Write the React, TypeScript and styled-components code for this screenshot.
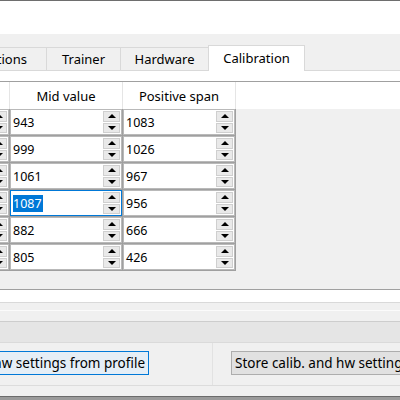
import React from "react";
import { styled, createGlobalStyle } from "styled-components";

const GlobalStyle = createGlobalStyle`
  html, body {
    margin: 0;
    padding: 0;
    background: #f0f0f0;
  }
  body {
    font-family: "Noto Sans", "Open Sans", sans-serif;
    font-size: 13px;
    color: #000;
    overflow: hidden;
  }
`;

// first column (negative span) lies outside the crop, only its spin buttons show
const ROWS = [
  { mid: 943, pos: 1083 },
  { mid: 999, pos: 1026 },
  { mid: 1061, pos: 967 },
  { mid: 1087, pos: 956 },
  { mid: 882, pos: 666 },
  { mid: 805, pos: 426 },
];

const TABS = [
  { label: "Global Functions", width: 141 },
  { label: "Trainer", width: 74 },
  { label: "Hardware", width: 88 },
  { label: "Calibration", width: 97, active: true },
];

function SpinBox({ value, focused }: { value?: number; focused?: boolean }) {
  return (
    <Spin $focused={focused}>
      <Value>{focused ? <Selected>{value}</Selected> : value}</Value>
      <SpinButtons>
        <SpinHalf>
          <ArrowUp />
        </SpinHalf>
        <SpinHalf>
          <ArrowDown />
        </SpinHalf>
      </SpinButtons>
    </Spin>
  );
}

function App() {
  return (
    <Screen>
      <GlobalStyle />
      <TopLine />
      <TopArea />
      <TabBar>
        {TABS.map((t) => (
          <Tab key={t.label} $width={t.width} $active={t.active}>
            {t.label}
          </Tab>
        ))}
      </TabBar>
      <Pane>
        <Table>
          <HeaderRow>
            <HeaderCell />
            <HeaderCell>Mid value</HeaderCell>
            <HeaderCell>Positive span</HeaderCell>
          </HeaderRow>
          <Body>
            {ROWS.map((r, i) => (
              <Row key={i}>
                <Cell>
                  <SpinBox />
                </Cell>
                <Cell>
                  <SpinBox value={r.mid} focused={i === 3} />
                </Cell>
                <Cell>
                  <SpinBox value={r.pos} />
                </Cell>
              </Row>
            ))}
          </Body>
        </Table>
      </Pane>
      <Splitter />
      <StatusStrip />
      <ButtonArea>
        <LeftSide>
          <Button $focused>Retrieve calib. and hw settings from profile</Button>
        </LeftSide>
        <RightSide>
          <Button>Store calib. and hw settings in profile</Button>
        </RightSide>
      </ButtonArea>
      <BottomFrame />
    </Screen>
  );
}

const Screen = styled("div")`
  width: 400px;
  height: 400px;
  overflow: hidden;
  display: flex;
  flex-direction: column;
  background: #f0f0f0;
`;

const TopLine = styled("div")`
  height: 1px;
  background: #6e6e6e;
  flex-shrink: 0;
`;

const TopArea = styled("div")`
  height: 33px;
  background: #ffffff;
  flex-shrink: 0;
`;

const TabBar = styled("div")`
  height: 36px;
  flex-shrink: 0;
  display: flex;
  align-items: flex-end;
  margin-left: -95px;
  border-bottom: 1px solid #d9d9d9;
  background: #f0f0f0;
`;

const Tab = styled("div")<{ $width: number; $active?: boolean }>`
  box-sizing: border-box;
  width: ${(p) => p.$width}px;
  flex-shrink: 0;
  height: ${(p) => (p.$active ? 26 : 23)}px;
  margin-bottom: ${(p) => (p.$active ? -1 : 0)}px;
  display: flex;
  align-items: center;
  justify-content: center;
  padding-bottom: ${(p) => (p.$active ? 2 : 0)}px;
  background: ${(p) => (p.$active ? "#ffffff" : "#f0f0f0")};
  border: 1px solid #d9d9d9;
  border-bottom: none;
  border-right: ${(p) => (p.$active ? "1px solid #d9d9d9" : "none")};
  white-space: nowrap;
`;

const Pane = styled("div")`
  flex-shrink: 0;
  background: #ffffff;
  padding: 10px 0 12px;
  border-bottom: 1px solid #d9d9d9;
`;

const Table = styled("div")`
  margin-left: -103px;
  width: 520px;
  border-top: 1px solid #a0a0a0;
  border-bottom: 1px solid #a0a0a0;
  background: #f0f0f0;
`;

const HeaderRow = styled("div")`
  display: flex;
  height: 27px;
  background: #ffffff;
`;

const HeaderCell = styled("div")`
  box-sizing: border-box;
  width: 113px;
  flex-shrink: 0;
  border-right: 1px solid #e5e5e5;
  display: flex;
  align-items: center;
  justify-content: center;
  color: #000;
  white-space: nowrap;
`;

const Body = styled("div")`
  height: 180px;
`;

const Row = styled("div")`
  display: flex;
  height: 27px;
`;

const Cell = styled("div")`
  box-sizing: border-box;
  width: 113px;
  height: 27px;
  flex-shrink: 0;
  border-right: 1px solid #a0a0a0;
  border-bottom: 1px solid #a0a0a0;
  display: flex;
`;

const Spin = styled("div")<{ $focused?: boolean }>`
  box-sizing: border-box;
  flex: 1;
  display: flex;
  background: #ffffff;
  border: 1px solid ${(p) => (p.$focused ? "#0078d7" : "#b9b9b9")};
`;

const Value = styled("div")`
  flex: 1;
  display: flex;
  align-items: center;
  padding-left: 2px;
  font-size: 12.5px;
`;

const Selected = styled("span")`
  background: #0078d7;
  color: #ffffff;
  line-height: 17px;
  padding: 0 1px 0 0;
`;

const SpinButtons = styled("div")`
  width: 17px;
  display: flex;
  flex-direction: column;
  gap: 1px;
  padding: 1px;
`;

const SpinHalf = styled("div")`
  flex: 1;
  box-sizing: border-box;
  background: #e9e9e9;
  border: 1px solid #cfcfcf;
  display: flex;
  align-items: center;
  justify-content: center;
`;

const ArrowUp = styled("div")`
  width: 0;
  height: 0;
  border-left: 4px solid transparent;
  border-right: 4px solid transparent;
  border-bottom: 4px solid #000;
`;

const ArrowDown = styled("div")`
  width: 0;
  height: 0;
  border-left: 4px solid transparent;
  border-right: 4px solid transparent;
  border-top: 4px solid #000;
`;

const Splitter = styled("div")`
  flex-shrink: 0;
  height: 7px;
  border-bottom: 1px solid #fbfbfb;
  margin-bottom: 10px;
`;

const StatusStrip = styled("div")`
  flex-shrink: 0;
  height: 20px;
  background: #e5e5e5;
  border-top: 1px solid #cdcdcd;
  border-bottom: 1px solid #dadada;
`;

const ButtonArea = styled("div")`
  flex-shrink: 0;
  height: 42px;
  display: flex;
  border-bottom: 1px solid #dcdcdc;
`;

const LeftSide = styled("div")`
  width: 213px;
  flex-shrink: 0;
  display: flex;
  justify-content: flex-end;
  align-items: flex-start;
  padding-top: 8px;
  padding-right: 63px;
  box-sizing: border-box;
  border-right: 1px solid #e2e2e2;
`;

const RightSide = styled("div")`
  flex: 1;
  display: flex;
  align-items: flex-start;
  padding-top: 8px;
  padding-left: 18px;
  overflow: hidden;
`;

const Button = styled("div")<{ $focused?: boolean }>`
  box-sizing: border-box;
  flex-shrink: 0;
  height: 24px;
  padding: 0 3px;
  line-height: 22px;
  font-size: 13.5px;
  white-space: nowrap;
  background: ${(p) => (p.$focused ? "#e5eef6" : "#e1e1e1")};
  border: 1px solid ${(p) => (p.$focused ? "#0078d7" : "#adadad")};
`;

const BottomFrame = styled("div")`
  flex-shrink: 0;
  margin-top: 10px;
  height: 3px;
  border-top: 1px solid #6b6b6b;
  background: #9a9a9a;
`;

export default App;
